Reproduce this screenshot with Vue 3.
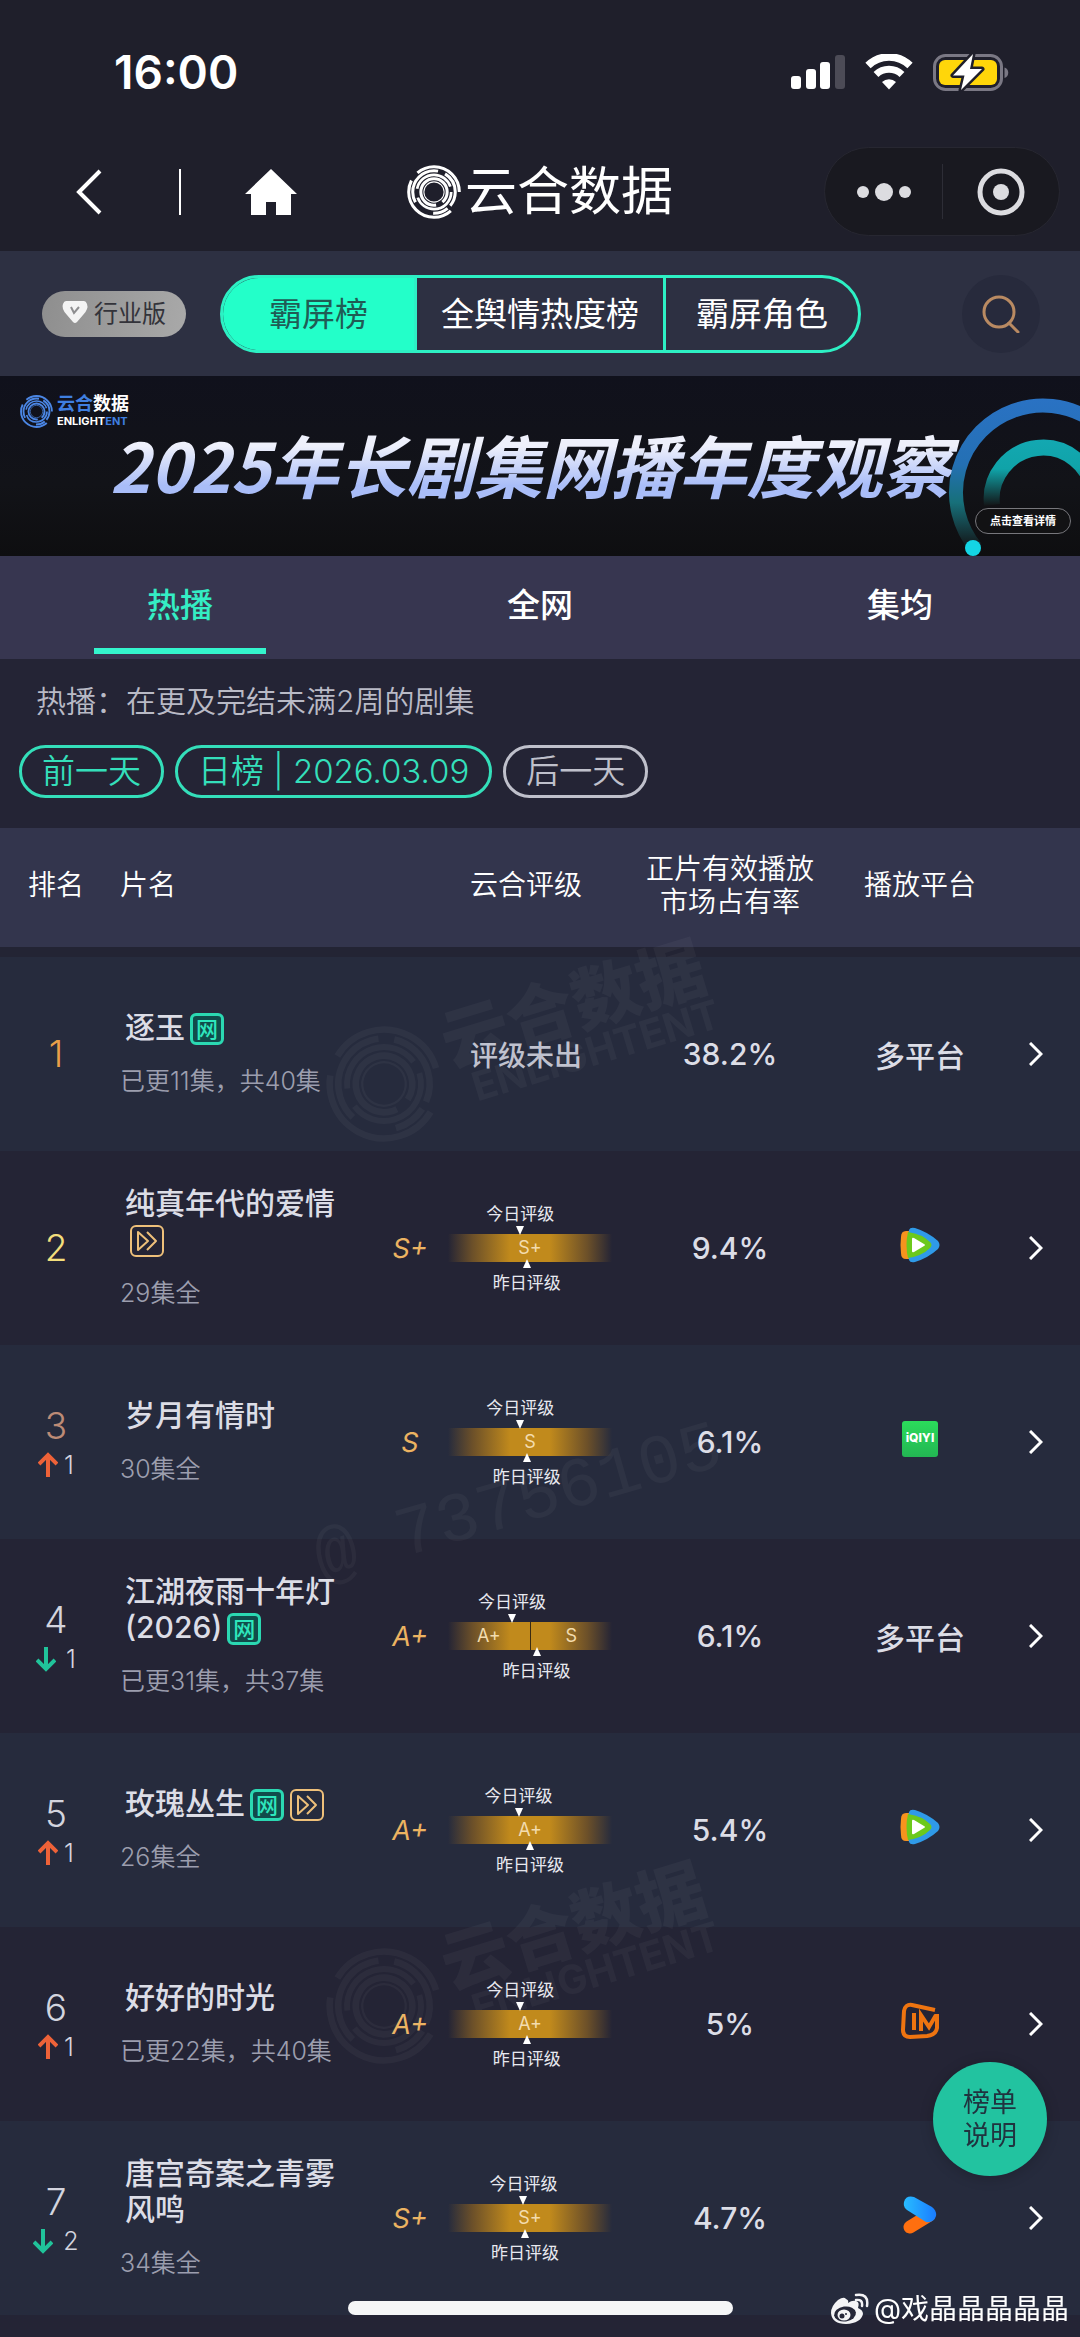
<template>
  <div class="page">
    <svg class="defs" aria-hidden="true">
      <symbol id="rings" viewBox="0 0 160 160">
        <circle
          v-for="(ring, i) in rings"
          :key="i"
          cx="80"
          cy="80"
          :r="ring.r"
          fill="none"
          stroke="currentColor"
          :stroke-width="ring.w"
          pathLength="360"
          :stroke-dasharray="`${ring.len} ${360 - ring.len}`"
          :stroke-dashoffset="-ring.from"
        />
      </symbol>
    </svg>

    <header class="top">
      <div class="status">
        <span class="clock">16:00</span>
        <div class="status-icons">
          <svg width="54" height="36" viewBox="0 0 54 36" aria-label="信号">
            <rect x="0" y="22" width="10" height="13" rx="3" fill="#fff" />
            <rect x="15" y="15" width="10" height="20" rx="3" fill="#fff" />
            <rect x="29" y="8" width="10" height="27" rx="3" fill="#fff" />
            <rect x="44" y="1" width="10" height="34" rx="3" fill="#4c4b56" />
          </svg>
          <svg width="48" height="36" viewBox="0 0 48 36" aria-label="无线网络">
            <path d="M3 12.5a30 30 0 0 1 42 0" fill="none" stroke="#fff" stroke-width="7.5" transform="translate(0 -1)" />
            <path d="M11 20.5a19 19 0 0 1 26 0" fill="none" stroke="#fff" stroke-width="7" />
            <path d="M24 35.5l-7-7.500a10.500 10.500 0 0 1 14 0z" fill="#fff" />
          </svg>
          <svg width="76" height="40" viewBox="0 0 76 40" aria-label="充电中">
            <rect x="1.500" y="3.500" width="67" height="34" rx="11" fill="none" stroke="#7a7884" stroke-width="3" />
            <rect x="6" y="8" width="58" height="25" rx="6" fill="#ffd60a" />
            <path d="M71.500 15.500c5 1 5 9.500 0 10.500z" fill="#7a7884" />
            <path d="M40 2L20 23.500h11.500L28 38 49 17H37z" fill="#fff" stroke="#1f1f2b" stroke-width="5" stroke-linejoin="round" />
            <path d="M40 2L20 23.500h11.500L28 38 49 17H37z" fill="#fff" />
          </svg>
        </div>
      </div>

      <div class="nav">
        <div class="nav-left">
          <button type="button" aria-label="返回">
            <svg width="26" height="46" viewBox="0 0 26 46">
              <path d="M24 2L3 23l21 21" fill="none" stroke="#fff" stroke-width="4" />
            </svg>
          </button>
          <i class="nav-line"></i>
          <button type="button" aria-label="首页">
            <svg width="52" height="46" viewBox="0 0 52 46">
              <path d="M26 0L52 25H46V46H31V33H21V46H6V25H0z" fill="#fff" stroke-linejoin="round" />
            </svg>
          </button>
        </div>
        <h1 class="brand">
          <svg width="54" height="54"><use href="#rings" /></svg>
          云合数据
        </h1>
        <div class="capsule">
          <button type="button" aria-label="更多">
            <svg width="54" height="20" viewBox="0 0 54 20" fill="#dcdce0">
              <circle cx="6" cy="10" r="6" />
              <circle cx="27" cy="10" r="9" />
              <circle cx="48" cy="10" r="6" />
            </svg>
          </button>
          <button type="button" aria-label="关闭">
            <svg width="48" height="48" viewBox="0 0 48 48">
              <circle cx="24" cy="24" r="21" fill="none" stroke="#dcdce0" stroke-width="5" />
              <circle cx="24" cy="24" r="8" fill="#dcdce0" />
            </svg>
          </button>
        </div>
      </div>
    </header>

    <div class="boards">
      <button type="button" class="edition">
        <svg width="26" height="24" viewBox="0 0 26 24">
          <path d="M4 1h18q2 0 3 3t0 5q-1 3-4 6l-6 7q-2 2-4 0l-6-7Q2 12 1 9t0-5q1-3 3-3z" fill="#f4f4f4" />
          <path d="M9 7l3 6 5-6" fill="none" stroke="#8e8e90" stroke-width="2" />
        </svg>
        行业版
      </button>
      <div class="segments">
        <button
          v-for="name in boards"
          :key="name"
          type="button"
          :class="{ active: name === board }"
          @click="board = name"
        >
          {{ name }}
        </button>
      </div>
      <button type="button" class="search" aria-label="搜索">
        <svg width="38" height="38" viewBox="0 0 38 38" fill="none" stroke="#b98a62" stroke-width="3">
          <circle cx="17" cy="17" r="15" />
          <path d="M27 28l9 9" stroke-linecap="round" />
        </svg>
      </button>
    </div>

    <a class="banner" href="#report">
      <span class="banner-logo">
        <svg width="33" height="33"><use href="#rings" /></svg>
        <span class="banner-name">
          <b><em>云合</em>数据</b>
          <small>ENLIGHT<em>ENT</em></small>
        </span>
      </span>
      <strong>2025年长剧集网播年度观察</strong>
      <svg class="banner-art" width="134" height="180" viewBox="0 0 134 180">
        <defs>
          <linearGradient id="outer" x1="0" y1="20" x2="0" y2="172" gradientUnits="userSpaceOnUse">
            <stop offset="0" stop-color="#2a72c4" />
            <stop offset=".45" stop-color="#2470b4" />
            <stop offset=".7" stop-color="#17707a" />
            <stop offset="1" stop-color="#131416" />
          </linearGradient>
          <linearGradient id="inner" x1="0" y1="56" x2="0" y2="130" gradientUnits="userSpaceOnUse">
            <stop offset="0" stop-color="#14a9b4" />
            <stop offset=".5" stop-color="#10a3a8" />
            <stop offset="1" stop-color="#131416" />
          </linearGradient>
        </defs>
        <path d="M30 172A87 87 0 1 1 184 117" fill="none" stroke="url(#outer)" stroke-width="14" />
        <path d="M46 129A51 51 0 1 1 148 117" fill="none" stroke="url(#inner)" stroke-width="16" />
        <circle cx="27" cy="172" r="8" fill="#14d5e4" />
      </svg>
      <span class="banner-more">点击查看详情</span>
    </a>

    <nav class="tabs">
      <button
        v-for="name in tabs"
        :key="name"
        type="button"
        :class="{ active: name === tab }"
        @click="tab = name"
      >
        <span>{{ name }}</span>
      </button>
    </nav>

    <section class="filters">
      <p>热播：在更及完结未满2周的剧集</p>
      <div class="days">
        <button type="button">前一天</button>
        <button type="button">日榜 | 2026.03.09</button>
        <button type="button" class="off">后一天</button>
      </div>
    </section>

    <main class="board">
      <svg class="watermark" viewBox="0 0 1080 1509" aria-hidden="true">
        <g v-for="y in [256, 1178]" :key="y" :transform="`translate(384 ${y}) rotate(-17)`">
          <use href="#rings" x="-58" y="-58" width="116" height="116" />
          <text class="wm-name" x="68" y="4">云合数据</text>
          <text class="wm-latin" x="84" y="44">ENLIGHTENT</text>
        </g>
        <text class="wm-id" transform="translate(322 752) rotate(-16)">@ 73756105</text>
      </svg>

      <table>
        <colgroup>
          <col class="c-rank" />
          <col />
          <col class="c-grade" />
          <col class="c-gauge" />
          <col class="c-share" />
          <col class="c-platform" />
          <col class="c-more" />
        </colgroup>
        <thead>
          <tr>
            <th>排名</th>
            <th class="left">片名</th>
            <th></th>
            <th>云合评级</th>
            <th>正片有效播放<br />市场占有率</th>
            <th>播放平台</th>
            <th></th>
          </tr>
        </thead>
        <tbody>
          <tr v-for="show in shows" :key="show.rank">
            <td class="rank" :class="[`rank-${show.rank}`, { moved: show.move }]">
              {{ show.rank }}
              <div v-if="show.move" class="move">
                <svg width="20" height="26" viewBox="0 0 20 26" :class="show.move > 0 ? 'up' : 'down'">
                  <path d="M10 25V3M1 12l9-9 9 9" fill="none" stroke="currentColor" stroke-width="4" />
                </svg>
                {{ Math.abs(show.move) }}
              </div>
            </td>
            <td class="left">
              <div class="title">
                {{ show.title }}<span v-if="show.web" class="tag web">网</span><span v-if="show.finished" class="tag fast">
                  <svg width="22" height="22" viewBox="0 0 22 22" fill="none" stroke="currentColor" stroke-width="2">
                    <path d="M2 2v18l10-9zM11 2l9 9-9 9" stroke-linejoin="round" />
                  </svg>
                </span>
              </div>
              <div class="episodes">{{ show.episodes }}</div>
            </td>
            <td class="grade">{{ show.grade }}</td>
            <td>
              <div v-if="show.levels" class="gauge">
                <div class="marker today" :style="{ left: show.today + '%' }">今日评级</div>
                <div class="bar">
                  <span v-for="level in show.levels" :key="level">{{ level }}</span>
                </div>
                <div class="marker yesterday" :style="{ left: show.yesterday + '%' }">昨日评级</div>
              </div>
              <span v-else class="pending">评级未出</span>
            </td>
            <td class="share">{{ show.share }}</td>
            <td class="platform">
              <svg v-if="show.platform === 'tencent'" width="40" height="36" viewBox="0 0 40 36" aria-label="腾讯视频">
                <path d="M1 10Q1 4 6 4h6v28H6q-5 0-5-6Q0 18 1 10z" fill="#f7931e" />
                <path d="M9 3q1-3 6-2 13 4 23 13 3 4 0 8-10 9-23 13-5 1-6-2-3-15 0-30z" fill="#2f9ae8" />
                <path d="M8 5q14 2 22 10 3 3 0 6-8 8-22 10-3-13 0-26z" fill="#6cc91c" />
                <path d="M12 12q0-2 2-1l10 6q2 1 0 2l-10 6q-2 1-2-1z" fill="#fff" />
              </svg>
              <span v-else-if="show.platform === 'iqiyi'" class="iqiyi">iQIYI</span>
              <svg v-else-if="show.platform === 'mango'" width="38" height="38" viewBox="0 0 38 38" fill="none" stroke="#ee7410" aria-label="芒果TV">
                <path d="M34 8L11 3Q4 2 3 9L2 28q0 7 7 7l17-1q9-1 10-8V12" stroke-width="4" />
                <path d="M13 11v17" stroke-width="4" />
                <path d="M20 29V13l8 12 7-12" stroke-width="4" />
              </svg>
              <svg v-else-if="show.platform === 'youku'" width="34" height="38" viewBox="0 0 34 38" aria-label="优酷">
                <defs>
                  <linearGradient id="yk" x1="0" x2="1">
                    <stop offset="0" stop-color="#28bcff" />
                    <stop offset="1" stop-color="#1a7cff" />
                  </linearGradient>
                </defs>
                <path d="M7 31l18-11" stroke="#ff6f0f" stroke-width="13" stroke-linecap="round" />
                <path d="M11 1l18 10q5 4 4 9-2 7-10 6L4 14Q0 11 1 6 3-1 11 1z" fill="url(#yk)" />
              </svg>
              <template v-else>{{ show.platform }}</template>
            </td>
            <td>
              <button type="button" class="more" :aria-label="show.title">
                <svg width="14" height="24" viewBox="0 0 14 24">
                  <path d="M1 1l11 11L1 23" fill="none" stroke="#fff" stroke-width="3" />
                </svg>
              </button>
            </td>
          </tr>
        </tbody>
      </table>
    </main>

    <button type="button" class="notes">榜单<br />说明</button>
    <div class="home-bar"></div>
    <div class="credit">
      <svg width="38" height="32" viewBox="0 0 38 32">
        <path
          d="M15 6q-2-3-8 1Q0 13 0 20q1 11 15 11 15-1 17-10 0-4-5-6 2-6-2-7t-8 2q1-3-2-4z"
          fill="#f4f4f6"
        />
        <ellipse cx="14" cy="21" rx="11" ry="7.500" fill="#252738" transform="rotate(-8 14 21)" />
        <ellipse cx="13" cy="22" rx="6.500" ry="5.500" fill="#f4f4f6" />
        <circle cx="11" cy="23" r="2.500" fill="#252738" />
        <circle cx="15" cy="21" r="1" fill="#252738" />
        <path d="M25 2q13-2 11 11M25 7q7-1 6 6" fill="none" stroke="#f4f4f6" stroke-width="2.500" stroke-linecap="round" />
      </svg>
      @戏晶晶晶晶晶
    </div>
  </div>
</template>

<script setup>
import { ref } from 'vue'

const boards = ['霸屏榜', '全舆情热度榜', '霸屏角色']
const board = ref('霸屏榜')

const tabs = ['热播', '全网', '集均']
const tab = ref('热播')

// arcs of the ring logo, angles in degrees clockwise from 3 o'clock
const rings = [
  { r: 75, w: 9, from: 228, len: 132 },
  { r: 75, w: 9, from: 48, len: 158 },
  { r: 63, w: 9, from: 150, len: 130 },
  { r: 63, w: 9, from: 300, len: 100 },
  { r: 63, w: 9, from: 50, len: 42 },
  { r: 51, w: 8, from: 190, len: 150 },
  { r: 51, w: 8, from: 0, len: 160 },
  { r: 39, w: 9, from: 80, len: 330 },
  { r: 30, w: 3, from: 0, len: 360 }
]

const shows = ref([
  { rank: 1, title: '逐玉', web: true, episodes: '已更11集，共40集', share: '38.2%', platform: '多平台' },
  { rank: 2, title: '纯真年代的爱情', finished: true, episodes: '29集全', grade: 'S+', levels: ['S+'], today: 44, yesterday: 48, share: '9.4%', platform: 'tencent' },
  { rank: 3, move: 1, title: '岁月有情时', episodes: '30集全', grade: 'S', levels: ['S'], today: 44, yesterday: 48, share: '6.1%', platform: 'iqiyi' },
  { rank: 4, move: -1, title: '江湖夜雨十年灯(2026)', web: true, episodes: '已更31集，共37集', grade: 'A+', levels: ['A+', 'S'], today: 39, yesterday: 54, share: '6.1%', platform: '多平台' },
  { rank: 5, move: 1, title: '玫瑰丛生', web: true, finished: true, episodes: '26集全', grade: 'A+', levels: ['A+'], today: 43, yesterday: 50, share: '5.4%', platform: 'tencent' },
  { rank: 6, move: 1, title: '好好的时光', episodes: '已更22集，共40集', grade: 'A+', levels: ['A+'], today: 44, yesterday: 48, share: '5%', platform: 'mango' },
  { rank: 7, move: -2, title: '唐宫奇案之青雾风鸣', episodes: '34集全', grade: 'S+', levels: ['S+'], today: 46, yesterday: 47, share: '4.7%', platform: 'youku' }
])
</script>

<style>
body { margin: 0; background: #242435; }
</style>

<style scoped>
.page { position: relative; min-height: 100vh; box-sizing: border-box; overflow: hidden; background: #242435; color: #fff; font-family: Inter, "Noto Sans CJK SC", sans-serif; }
.defs { position: absolute; width: 0; height: 0; }
button { margin: 0; padding: 0; border: 0; background: none; color: inherit; font: inherit; cursor: pointer; }
svg { display: block; flex: none; }

.top { background: #1f1f2b; }
.status { display: flex; justify-content: space-between; align-items: center; height: 56px; padding: 44px 71px 32px 114px; }
.clock { font-size: 46px; font-weight: 600; }
.status-icons { display: flex; align-items: center; gap: 20px; }

.nav { display: grid; grid-template-columns: 1fr auto 1fr; align-items: center; height: 119px; padding: 0 20px 0 20px; }
.nav-left { display: flex; align-items: center; padding-left: 56px; }
.nav-line { width: 2px; height: 46px; margin: 0 64px 0 77px; background: #fff; }
.brand { display: flex; align-items: center; gap: 4px; margin: 0; font-size: 52px; font-weight: 400; line-height: 60px; }
.capsule { display: flex; justify-self: end; width: 234px; height: 87px; border: 1px solid #272731; border-radius: 45px; background: #191920; }
.capsule button { display: flex; flex: 1; align-items: center; justify-content: center; }
.capsule button + button { position: relative; }
.capsule button + button::before { content: ""; position: absolute; left: 0; top: 16px; bottom: 16px; width: 1px; background: #2d2d36; }

.boards { display: flex; align-items: center; height: 125px; padding: 0 40px 0 42px; background: #2d3042; }
.edition { display: flex; align-items: center; justify-content: center; gap: 6px; width: 144px; height: 46px; margin-right: 34px; padding-bottom: 4px; border-radius: 23px; background: linear-gradient(100deg, #8e8e8e, #a9a9a9); color: #33333a; font-size: 24px; }
.segments { display: flex; height: 78px; box-sizing: border-box; overflow: hidden; border: 3px solid #2df0c4; border-radius: 39px; font-size: 33px; }
.segments button { padding: 0 30px 4px; border-left: 3px solid #2df0c4; }
.segments button:first-child { padding: 0 46px 4px; border-left: 0; }
.segments button:nth-child(2) { padding: 0 24px 4px; }
.segments .active { background: #23ffc9; color: #205c55; }
.search { display: grid; place-items: center; width: 78px; height: 78px; margin-left: auto; border-radius: 50%; background: #272a3c; }

.banner { position: relative; display: block; height: 162px; padding-top: 18px; overflow: hidden; background: linear-gradient(#10111c, #121318 60%, #0e0e10); color: #fff; text-decoration: none; }
.banner-logo { display: flex; align-items: center; gap: 4px; padding-left: 20px; color: #4b86e4; }
.banner-name { color: #fff; }
.banner-name em { color: #3f7fe0; font-style: normal; }
.banner-name b { display: block; font-size: 18px; line-height: 20px; font-weight: 700; }
.banner-name small { display: block; font-size: 11px; line-height: 14px; font-weight: 700; }
.banner strong { display: inline-block; padding: 0 24px 0 110px; background: linear-gradient(#eef0fb 25%, #a9bdf8 80%); background-clip: text; -webkit-background-clip: text; color: transparent; font-family: "Noto Sans CJK SC", sans-serif; font-size: 68px; font-style: italic; font-weight: 700; line-height: 72px; white-space: nowrap; }
.banner-art { position: absolute; right: 0; top: 0; }
.banner-more { position: absolute; right: 9px; top: 132px; padding: 0 14px; border: 1px solid #77777c; border-radius: 13px; background: #121214; font-size: 11px; font-weight: 700; line-height: 24px; }

.tabs { display: flex; background: #373650; }
.tabs button { flex: 1; display: flex; justify-content: center; height: 103px; font-size: 33px; font-weight: 500; }
.tabs span { min-width: 172px; height: 92px; line-height: 98px; border-bottom: 6px solid transparent; }
.tabs .active { color: #34edc4; }
.tabs .active span { border-color: #34f5cd; }

.filters { padding: 22px 19px 30px; }
.filters p { margin: 0 17px 24px; color: #b9bac6; font-size: 30px; line-height: 40px; font-weight: 350; }
.days { display: flex; gap: 11px; color: #34dfba; font-size: 33px; font-weight: 350; }
.days button { height: 53px; padding: 0 20px; border: 3px solid; border-radius: 27px; line-height: 45px; }
.days .off { color: #bfc0cb; }

.board { position: relative; }
.watermark { position: absolute; left: 0; top: 0; width: 100%; color: #fff; opacity: 0.035; fill: #fff; pointer-events: none; }
.wm-name { font-size: 68px; font-weight: 900; }
.wm-latin { font-size: 40px; font-weight: 700; }
.wm-id { font-family: "Liberation Mono", monospace; font-size: 70px; }

table { width: 100%; table-layout: fixed; border-collapse: collapse; }
.c-rank { width: 112px; }
.c-grade { width: 60px; }
.c-gauge { width: 172px; }
.c-share { width: 236px; }
.c-platform { width: 144px; }
.c-more { width: 88px; }
th { height: 115px; padding: 0 0 4px; background: #33354d; font-size: 28px; font-weight: 350; line-height: 33px; white-space: nowrap; }
th.left { padding-left: 8px; text-align: left; }
thead { border-bottom: 10px solid #232434; }
td { height: 194px; padding: 0; text-align: center; vertical-align: middle; }
tbody tr:nth-child(odd) { background: #262b3d; }
tbody tr:nth-child(even) { background: #242435; }
td.left { padding-left: 8px; text-align: left; }

.rank { color: #d3d4de; font-size: 37px; font-weight: 350; line-height: 40px; }
.rank-1 { color: #e9a049; }
.rank-2 { color: #f3de7c; }
.rank-3 { color: #bd8b76; }
.moved { padding-top: 6px; height: 188px; }
.move { display: flex; align-items: center; justify-content: center; gap: 6px; color: #d3d4de; font-size: 25px; line-height: 38px; }
.up { color: #ee6238; }
.down { margin-right: 4px; color: #20c39a; transform: rotate(180deg); }

.title { width: 216px; margin-left: 5px; color: #dcdde6; font-size: 30px; font-weight: 500; line-height: 36px; }
.tag { display: inline-flex; align-items: center; justify-content: center; width: 34px; height: 32px; box-sizing: border-box; margin: 0 1px 0 5px; border-radius: 6px; vertical-align: middle; }
.web { border: 3px solid #2bd8b2; background: #114b4b; color: #2ee6bd; font-size: 22px; line-height: 26px; }
.fast { border: 2px solid #eec07a; color: #eec07a; }
.episodes { margin-top: 18px; color: #9c9eae; font-size: 25px; font-weight: 350; line-height: 36px; }

.grade { color: #ecb361; font-size: 27px; font-style: italic; }
.pending { color: #bfc1ce; font-size: 28px; font-weight: 500; }
.gauge { position: relative; width: 164px; margin-left: auto; padding: 34px 0; }
.bar { display: flex; height: 28px; background: linear-gradient(90deg, transparent, #6c5029 15%, #c18a1c 38%, #c18a1c 62%, #6c5029 85%, transparent); color: #f3dcae; font-size: 18px; line-height: 28px; }
.bar span { flex: 1; }
.bar span + span { border-left: 1px solid #3a2b12; }
.marker { position: absolute; transform: translateX(-50%); color: #e8e9f0; font-size: 17px; line-height: 20px; white-space: nowrap; }
.marker::after { content: ""; position: absolute; left: 50%; margin-left: -4px; border: 4px solid transparent; }
.today { top: 4px; }
.today::after { top: 22px; border-top: 9px solid #fff; border-bottom: 0; }
.yesterday { bottom: 3px; }
.yesterday::after { bottom: 25px; border-bottom: 9px solid #fff; border-top: 0; }

.share { color: #dcdde6; font-size: 30px; font-weight: 500; }
.platform { color: #dcdde6; font-size: 30px; font-weight: 500; }
.platform svg, .iqiyi { display: block; margin: 0 auto 6px; }
.iqiyi { width: 36px; height: 36px; border-radius: 3px; background: linear-gradient(#2bdc5b, #23b653); color: #fff; font-size: 12px; font-weight: 800; line-height: 34px; }
.more { padding: 10px; vertical-align: middle; }

.notes { position: fixed; right: 33px; bottom: 161px; width: 114px; height: 114px; border-radius: 50%; background: #22c3a0; box-shadow: 0 2px 14px rgba(0, 0, 0, .2); color: #20333f; font-size: 27px; line-height: 33px; }
.home-bar { position: fixed; left: 50%; bottom: 22px; width: 385px; height: 14px; margin-left: -192px; border-radius: 7px; background: #f5f6f7; }
.credit { position: fixed; right: 11px; bottom: 10px; display: flex; align-items: center; gap: 5px; font-size: 28px; line-height: 36px; }
</style>
